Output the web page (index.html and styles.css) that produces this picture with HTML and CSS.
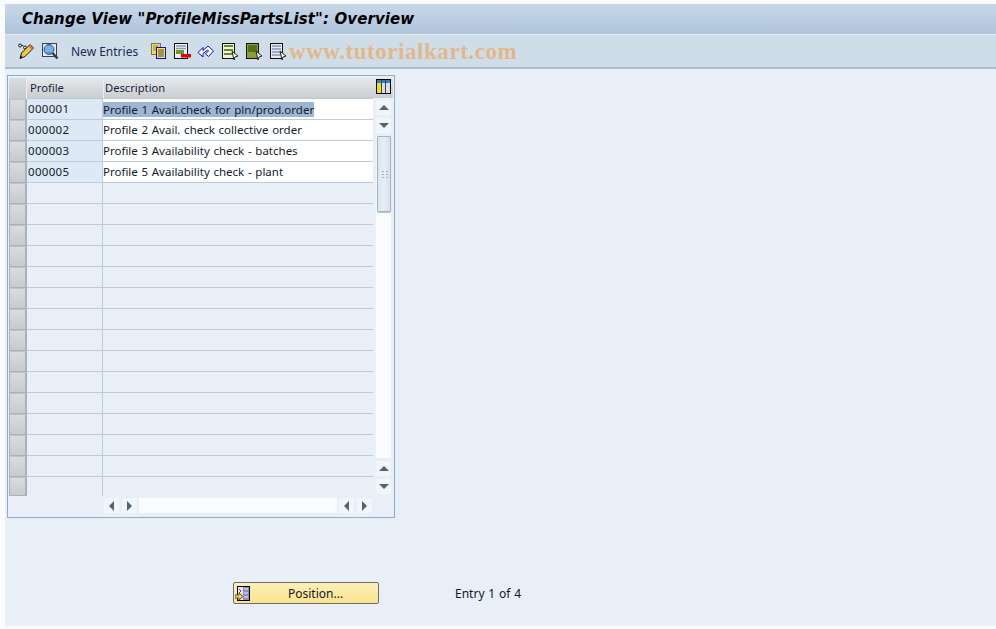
FILE: index.html
```html
<!DOCTYPE html>
<html lang="en">
<head>
<meta charset="utf-8">
<title>Change View</title>
<link rel="stylesheet" href="styles.css">
</head>
<body>
<div class="screen">
  <header class="title-bar"><h1>Change View "ProfileMissPartsList": Overview</h1></header>
  <nav class="toolbar">
    <svg class="ic" viewBox="0 0 18 18"><path d="M1.500 3.500a1.500 1.500 0 1 1 3 0a1.500 1.500 0 1 1-3 0M4.500 3l2 1M6.500 5.500a1.500 1.500 0 1 1 3 0a1.500 1.500 0 1 1-3 0" fill="none" stroke="#222222" stroke-width="1"/><path d="M3 16.500l1.500-5.500 8.500-8.500 3.500 3.500-8.500 8.500z" fill="#f6c63c" stroke="#1a1a1a"/><path d="M12 3.500l3.500 3.500" stroke="#d8704c" stroke-width="2"/><path d="M3 16.500l1-3 2 2z" fill="#1a1a1a"/></svg>
    <svg class="ic" viewBox="0 0 18 18"><rect x="1.500" y="1.500" width="14" height="13" fill="#e4ebf1" stroke="#39434d"/><circle cx="8" cy="7.500" r="5" fill="#4f94ea" stroke="#4a5a68"/><path d="M4 5h8M4 7h8M4 9h8" stroke="#a7cbf5"/><path d="M11.500 11l5 5.500" stroke="#2f3a45" stroke-width="2.400"/></svg>
    <span class="tool-text">New Entries</span>
    <svg class="ic" viewBox="0 0 18 18"><rect x="2.500" y="1.500" width="9" height="11" fill="#f6dc4a" stroke="#777766"/><path d="M4 4h6M4 6h6M4 8h6" stroke="#888877"/><rect x="7.500" y="5.500" width="9" height="11" fill="#fbe64c" stroke="#0a0ad0"/><path d="M9 8h6M9 10h6M9 12h6M9 14h6" stroke="#444444"/></svg>
    <svg class="ic" viewBox="0 0 18 18"><rect x="1.500" y="1.500" width="13" height="15" fill="#f0f3f6" stroke="#111111"/><path d="M3 4h10M3 6.500h10" stroke="#8898c0" stroke-width="1.400"/><rect x="3" y="8" width="8" height="4" fill="#6c9a20"/><rect x="8" y="12" width="10" height="3.500" fill="#e00010"/></svg>
    <svg class="ic" viewBox="0 0 18 18"><path d="M1 10.500l5-5v3l5-4.500 5.500 5-5 5.500-3-2.500 3-3-1-1-4.500 3.500v3.500z" fill="#ffffff" stroke="#0a0ad0"/></svg>
    <svg class="ic" viewBox="0 0 18 18"><rect x="1.500" y="1.500" width="12" height="15" fill="#eef1e4" stroke="#111111"/><path d="M3 4h9M3 8h9M3 12h9" stroke="#6c8a20" stroke-width="2.200"/><path d="M11 9l6 5-3 1-1 3z" fill="#ffffff" stroke="#222222"/></svg>
    <svg class="ic" viewBox="0 0 18 18"><rect x="1.500" y="1.500" width="12" height="15" fill="#8aa030" stroke="#111111"/><rect x="3" y="3" width="9" height="7" fill="#56701c"/><path d="M11 9l6 5-3 1-1 3z" fill="#ffffff" stroke="#222222"/></svg>
    <svg class="ic" viewBox="0 0 18 18"><rect x="1.500" y="1.500" width="12" height="15" fill="#e6ebf0" stroke="#111111"/><path d="M3 4h9M3 7h9M3 10h9M3 13h9" stroke="#8898b8" stroke-width="1.400"/><path d="M11 9l6 5-3 1-1 3z" fill="#ffffff" stroke="#222222"/></svg>
    <span class="watermark">www.tutorialkart.com</span>
  </nav>
  <main class="content">
    <section class="table-box">
      <div class="table-main">
        <div class="grid">
          <div class="corner"></div><div class="col-head col-a">Profile</div><div class="col-head">Description</div>
          <div class="sel"></div><div class="cell key filled">000001</div><div class="cell filled"><span class="hl">Profile 1 Avail.check for pln/prod.order</span></div>
          <div class="sel"></div><div class="cell key filled">000002</div><div class="cell filled">Profile 2 Avail. check collective order</div>
          <div class="sel"></div><div class="cell key filled">000003</div><div class="cell filled">Profile 3 Availability check - batches</div>
          <div class="sel"></div><div class="cell key filled">000005</div><div class="cell filled">Profile 5 Availability check - plant</div>
          <div class="sel"></div><div class="cell key"></div><div class="cell"></div>
          <div class="sel"></div><div class="cell key"></div><div class="cell"></div>
          <div class="sel"></div><div class="cell key"></div><div class="cell"></div>
          <div class="sel"></div><div class="cell key"></div><div class="cell"></div>
          <div class="sel"></div><div class="cell key"></div><div class="cell"></div>
          <div class="sel"></div><div class="cell key"></div><div class="cell"></div>
          <div class="sel"></div><div class="cell key"></div><div class="cell"></div>
          <div class="sel"></div><div class="cell key"></div><div class="cell"></div>
          <div class="sel"></div><div class="cell key"></div><div class="cell"></div>
          <div class="sel"></div><div class="cell key"></div><div class="cell"></div>
          <div class="sel"></div><div class="cell key"></div><div class="cell"></div>
          <div class="sel"></div><div class="cell key"></div><div class="cell"></div>
          <div class="sel"></div><div class="cell key"></div><div class="cell"></div>
          <div class="sel"></div><div class="cell key"></div><div class="cell"></div>
          <div class="sel last"></div><div class="cell key last"></div><div class="cell last"></div>
        </div>
        <div class="hscroll">
          <span class="sb-btn"><i class="tri tri-l"></i></span>
          <span class="sb-btn"><i class="tri tri-r"></i></span>
          <span class="h-track"></span>
          <span class="sb-btn"><i class="tri tri-l"></i></span>
          <span class="sb-btn"><i class="tri tri-r"></i></span>
        </div>
      </div>
      <div class="vside">
        <div class="config-band">
          <svg class="col-config" viewBox="0 0 15 15"><rect x=".5" y=".5" width="14" height="14" fill="#ffffff" stroke="#000000"/><rect x="1" y="1" width="13" height="3" fill="#3a7fc0"/><rect x="1" y="4" width="4" height="10" fill="#f7e000"/><rect x="6" y="4" width="3" height="10" fill="#dddde6"/><rect x="10" y="4" width="4" height="10" fill="#dddde6"/><path d="M5.500 1v13M9.500 1v13" stroke="#334455"/></svg>
        </div>
        <div class="vscroll">
          <span class="sb-btn"><i class="tri tri-u"></i></span>
          <span class="sb-btn"><i class="tri tri-d"></i></span>
          <div class="v-track">
            <div class="thumb"><i class="grip"></i></div>
          </div>
          <span class="sb-btn"><i class="tri tri-u"></i></span>
          <span class="sb-btn"><i class="tri tri-d"></i></span>
        </div>
      </div>
    </section>
    <div class="actions">
      <button class="pos-btn" type="button">
        <svg class="pos-ic" viewBox="0 0 15 15"><rect x="2.500" y=".5" width="12" height="14" fill="#8a8fc0" stroke="#000000"/><rect x="3" y="1" width="5" height="13" fill="#e6e6f0"/><path d="M9 3h4M9 7h4M9 11h4" stroke="#eeeeff"/><path d="M4 3l2 2-2 2" fill="none" stroke="#555566"/><path d="M0 9h4V7l4 3.500L4 14v-2H0z" fill="#f7d820" stroke="#555544"/></svg>
        <span>Position...</span>
      </button>
      <span class="entry">Entry 1 of 4</span>
    </div>
  </main>
</div>
</body>
</html>
```
FILE: styles.css
```css
* { box-sizing: border-box; }
html, body { margin: 0; height: 100%; background: #fafbfd; }
body { font: 11.5px "Noto Sans", "Liberation Sans", sans-serif; word-spacing: .7px; color: #10203a; overflow: hidden; }
.screen { width: 991px; height: 622px; margin: 4px 0 0 5px; display: flex; flex-direction: column; background: #e8eff7; }
.title-bar { height: 31px; flex: none; padding: 0 0 0 17px; display: flex; align-items: center; background: linear-gradient(#c9d8e8, #aec3da); border-bottom: 1px solid #e6edf4; }
h1 { margin: 0; font: italic bold 15px "DejaVu Sans", sans-serif; letter-spacing: .1px; word-spacing: 0; color: #000; white-space: nowrap; }
.toolbar { position: relative; height: 34px; flex: none; display: flex; align-items: center; padding: 0 0 1px 12px; gap: 6px; background: #cfdde9; border-bottom: 2px solid #a9bccf; }
.ic { width: 18px; height: 18px; flex: none; }
.tool-text { margin: 1px 5px 0 6px; font-size: 12px; word-spacing: 0; color: #1c2a50; }
.watermark { position: absolute; left: 284px; top: 4px; font: bold 23px "Liberation Serif", serif; word-spacing: 0; color: #e3b78a; letter-spacing: .55px; }
.content { flex: 1; padding: 6px 0 0 2px; display: flex; flex-direction: column; }
.table-box { width: 388px; height: 443px; flex: none; display: flex; border: 1px solid #8badcf; padding: 2px 1px 0 1px; }
.table-main { width: 364px; flex: none; display: flex; flex-direction: column; }
.grid { display: grid; grid-template-columns: 18px 76px 270px; grid-template-rows: 21px repeat(18, 21px) 19px; }
.corner { background: linear-gradient(#d9dcdf, #c4c9cd); border-right: 1px solid #e8eff7; }
.col-head { background: linear-gradient(#e6e8ea, #c9ced2); padding: 0 0 0 1px; font-size: 11.2px; line-height: 19px; border-left: 1px solid #e8eff7; border-bottom: 1px solid #bcc6cf; color: #16233a; }
.col-head.col-a { border-left: 0; padding-left: 3px; }
.sel { background: linear-gradient(#d9dcdf, #c6cbcf); border: 1px solid #a9b1bb; border-top-color: #bcc3cb; border-right-width: 2px; }
.cell { border-bottom: 1px solid #bfcbd9; line-height: 19px; white-space: nowrap; color: #141c2c; }
.cell.key { border-right: 1px solid #bfcbd9; font-size: 11.5px; letter-spacing: .3px; padding-left: 1px; }
.cell.key.filled { background: #dde9f4; }
.cell.filled:not(.key) { background: #fff; }
.cell.last { border-bottom: 0; }
.hl { background: #9db6d3; display: inline-block; line-height: 15px; vertical-align: middle; }
.hscroll { display: flex; gap: 3px; padding: 2px 0 0 95px; }
.sb-btn { width: 15px; height: 15px; flex: none; display: flex; align-items: center; justify-content: center; background: #f2f5f9; }
.h-track { width: 198px; height: 15px; background: #fafbfd; margin: 0 -1px; }
.tri { display: block; width: 0; height: 0; border: 4px solid transparent; }
.tri-u { border-top: 0; border-left-width: 5px; border-right-width: 5px; border-bottom: 5px solid #4f6478; }
.tri-d { border-bottom: 0; border-left-width: 5px; border-right-width: 5px; border-top: 5px solid #4f6478; }
.tri-l { border-left: 0; border-top-width: 5px; border-bottom-width: 5px; border-right: 5px solid #4f6478; }
.tri-r { border-right: 0; border-top-width: 5px; border-bottom-width: 5px; border-left: 5px solid #4f6478; }
.vside { width: 20px; flex: none; display: flex; flex-direction: column; }
.config-band { height: 20px; flex: none; padding: 1px 0 0 3px; background: linear-gradient(#e6e8ea, #c9ced2); }
.col-config { display: block; width: 15px; height: 15px; }
.vscroll { width: 15px; margin: 2px 0 0 3px; display: flex; flex-direction: column; gap: 3px; }
.v-track { height: 322px; flex: none; background: #fafbfd; }
.thumb { height: 76px; margin-left: 1px; border: 1px solid #a6b3c0; border-radius: 1px; background: linear-gradient(90deg, #dbe6ef, #e6eef6 50%, #d5e1ec); display: flex; align-items: center; justify-content: center; box-shadow: 0 1px 1px #b8c2cc; }
.grip { display: block; width: 7px; height: 8px; background-image: radial-gradient(#9fb0c2 1px, transparent 1.2px); background-size: 4px 3px; }
.actions { display: flex; align-items: center; margin: 64px 0 0 226px; }
.pos-btn { width: 146px; height: 22px; display: flex; align-items: center; padding: 0 0 0 1px; border: 1px solid #6b6b6b; border-radius: 2px; background: linear-gradient(#fdf0b8, #fbe48e); font: 12px "Noto Sans", "Liberation Sans", sans-serif; color: #10182a; }
.pos-ic { width: 15px; height: 15px; flex: none; }
.pos-btn span { margin-left: 38px; }
.entry { margin-left: 76px; font-size: 12px; word-spacing: .7px; color: #10182a; }
```
